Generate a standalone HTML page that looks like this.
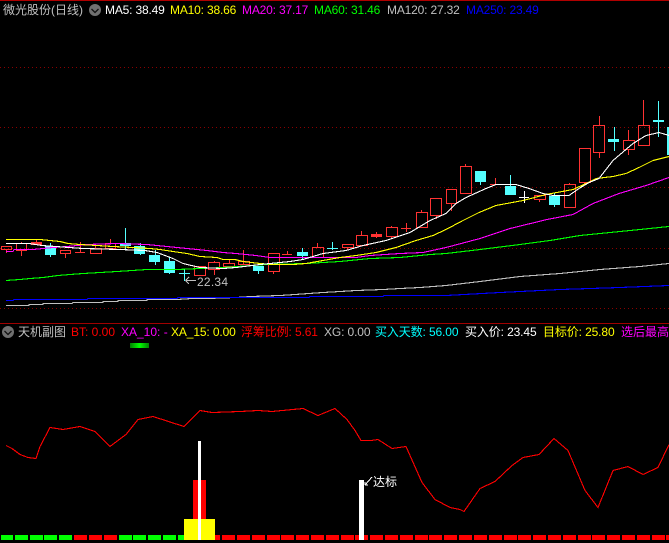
<!DOCTYPE html>
<html><head><meta charset="utf-8"><style>
html,body{margin:0;padding:0;background:#000}
#w{position:relative;width:669px;height:543px;overflow:hidden;background:#000;font:12px "Liberation Sans","WenQuanYi Zen Hei","Noto Sans CJK SC",sans-serif}
#w span{position:absolute;white-space:nowrap;line-height:14px}
#w span.m{letter-spacing:-.17px}
#w span.n{letter-spacing:-.12px}
svg{position:absolute;left:0;top:0}
.ma polyline{stroke-width:1.1}
</style></head><body><div id="w">
<svg width="669" height="543" viewBox="0 0 669 543" shape-rendering="crispEdges" fill="none">
<rect x="0" y="0" width="669" height="1" fill="#b00000"/>
<rect x="0" y="323" width="669" height="1" fill="#a00000"/>
<g stroke="#8a0000" stroke-dasharray="1 3">
<path d="M0 67.5H669M0 127.5H669M0 187.5H669M0 248.5H669M0 308.5H669"/>
</g>
<!-- red candles -->
<g stroke="#ff3232">
<path d="M1.5 246.5H11.5V249.5H1.5ZM6.5 250V253"/>
<path d="M16.5 243.5H26.5V250.5H16.5ZM21.5 242V243M21.5 251V256"/>
<path d="M60.5 250.5H70.5V253.5H60.5ZM65.5 254V258"/>
<path d="M75 252.5H85M80.5 242V253"/>
<path d="M90.5 248.5H101.5V253.5H90.5ZM95.5 244V248"/>
<path d="M105.5 243.5H115.5V248.5H105.5ZM110.5 239V243M110.5 249V250"/>
<path d="M194.5 266.5H205.5V275.5H194.5Z"/>
<path d="M208.5 262.5H219.5V269.5H208.5ZM214.5 261V262M214.5 270V275"/>
<path d="M223.5 263.5H234.5V266.5H223.5ZM229.5 259V263"/>
<path d="M238.5 261.5H249.5V264.5H238.5ZM243.5 250V264"/>
<path d="M268.5 253.5H279.5V271.5H268.5ZM273.5 272V274"/>
<path d="M282 254.5H292M287.5 251V254"/>
<path d="M312.5 247.5H323.5V257.5H312.5ZM317.5 243V247"/>
<path d="M342.5 244.5H353.5V247.5H342.5ZM347.5 248V250"/>
<path d="M356.5 235.5H367.5V245.5H356.5ZM361.5 231V235"/>
<path d="M386.5 227.5H397.5V236.5H386.5ZM391.5 226V227M391.5 237V238"/>
<path d="M401 228.5H411M406.5 223V232"/>
<path d="M416.5 212.5H427.5V227.5H416.5ZM421.5 210V212"/>
<path d="M430.5 198.5H441.5V215.5H430.5ZM436.5 216V219"/>
<path d="M446.5 189.5H456.5V203.5H446.5ZM451.5 204V211"/>
<path d="M460.5 166.5H471.5V193.5H460.5ZM465.5 164V166"/>
<path d="M490 184.5H500M495.5 178V185"/>
<path d="M534.5 195.5H545.5V199.5H534.5ZM539.5 200V202"/>
<path d="M564.5 184.5H575.5V207.5H564.5ZM569.5 183V184"/>
<path d="M579.5 148.5H590.5V182.5H579.5ZM584.5 183V184"/>
<path d="M593.5 125.5H604.5V152.5H593.5ZM599.5 116V125M599.5 153V158"/>
<path d="M623.5 140.5H634.5V149.5H623.5ZM628.5 130V140M628.5 150V155"/>
<path d="M638.5 125.5H649.5V145.5H638.5ZM643.5 100V125"/>
</g>
<g fill="#ff3232">
<rect x="31" y="242" width="11" height="3"/><rect x="36" y="240" width="1" height="2"/>
<rect x="371" y="234" width="11" height="3"/><rect x="376" y="232" width="1" height="6"/>
</g>
<!-- cyan candles -->
<g stroke="#54ffff">
<path d="M50.5 243V257M125.5 228V250M140.5 243V255M155.5 250V265M169.5 257V274M258.5 271V274M302.5 248V260M480.5 182V185M510.5 175V195M554.5 193V207M614.5 127V151M658.5 101V137"/>
<path d="M179 273.5H190M184.5 269V281M327 248.5H338M332.5 242V250"/>
</g>
<g fill="#54ffff">
<rect x="45" y="246" width="11" height="9"/>
<rect x="120" y="243" width="11" height="3"/>
<rect x="134" y="246" width="11" height="8"/>
<rect x="149" y="255" width="11" height="7"/>
<rect x="164" y="261" width="11" height="12"/>
<rect x="253" y="266" width="11" height="5"/>
<rect x="297" y="252" width="11" height="4"/>
<rect x="475" y="171" width="11" height="11"/>
<rect x="505" y="186" width="11" height="9"/>
<rect x="549" y="196" width="11" height="9"/>
<rect x="608" y="139" width="11" height="3"/>
<rect x="653" y="120" width="11" height="2"/>
<rect x="667" y="127" width="2" height="28"/>
</g>
<path d="M519 197.5H529M524.5 191V203" stroke="#fff"/>
<!-- MA lines -->
<g class="ma">
<polyline stroke="#c0c0c0" points="6,305.5 29,305.5 29,304.5 43,304.5 43,303.5 72,303.5 73,302.5 103,302.5 103,301.5 118,301.5 118,300.5 147,300.5 147,299.5 177,299.5 192,298.5 207,298.5 236,297.5 251,296.5 280,295.5 295,294.5 323,292.5 340,291.5 356,290.5 383,289.5 400,288.5 420,287.5 433,286.5 446,285.5 480,281.5 520,276.5 560,273.5 600,269.5 640,266.5 669,263.5"/>
<polyline stroke="#0000ff" points="6,300.5 13,300.5 14,299.5 87,299.5 88,298.5 177,298.5 178,297.5 309,297.5 310,296.5 383,296.5 384,295.5 446,295.5 500,292.5 560,289.5 620,287.5 669,285.5"/>
<polyline stroke="#00ff00" points="6,280.5 20,279.5 30,278.5 43,277.5 58,275.5 70,274.5 83,273.5 100,272.5 117,271.5 147,269.5 177,269.5 223,267.5 266,264.5 306,263.5 340,261.5 370,258.5 400,257.5 430,254.5 446,253.5 480,249.5 520,244.5 550,240.5 580,235.5 610,232.5 640,229.5 669,226.5"/>
<polyline stroke="#ff00ff" points="6,251.5 13,251.5 14,249.5 33,249.5 43,248.5 53,247.5 67,246.5 87,244.5 117,243.5 147,244.5 167,246.5 187,248.5 207,250.5 223,252.5 236,253.5 256,255.5 270,257.5 290,257.5 323,257.5 356,257.5 370,255.5 400,253.5 423,252.5 446,247.5 480,238.5 510,228.5 547,219.5 573,214.5 593,203.5 619,193.5 646,185.5 669,177.5"/>
<polyline stroke="#ffff00" points="6,239.5 40,239.5 50,240.5 60,241.5 68,243.5 80,244.5 97,245.5 113,246.5 133,247.5 150,248.5 160,249.5 173,251.5 187,253.5 200,256.5 217,257.5 223,259.5 235,259.5 243,261.5 260,263.5 273,264.5 293,264.5 306,263.5 323,260.5 340,257.5 356,255.5 376,252.5 396,247.5 416,240.5 433,235.5 446,229.5 463,220.5 479,212.5 496,205.5 523,200.5 546,194.5 573,189.5 586,183.5 596,178.5 613,176.5 626,173.5 639,167.5 653,160.5 669,156.5"/>
<polyline stroke="#ffffff" points="6,243.5 29,243.5 42,245.5 83,248.5 120,249.5 145,250.5 157,252.5 173,258.5 183,263.5 200,267.5 223,268.5 236,267.5 260,264.5 290,261.5 303,259.5 323,253.5 346,250.5 363,245.5 386,240.5 410,232.5 430,220.5 446,213.5 456,203.5 466,197.5 486,188.5 496,184.5 516,184.5 529,188.5 543,193.5 553,195.5 569,195.5 579,188.5 589,182.5 599,178.5 613,160.5 633,143.5 646,135.5 659,132.5 669,135.5"/>
</g>
<path d="M185.5 280.5H196M185.5 280.5L189 277M185.5 280.5L189 284" stroke="#c0c0c0"/>
<!-- sub chart -->
<defs><linearGradient id="g"><stop offset="0" stop-color="#008000"/><stop offset=".5" stop-color="#00ff00"/><stop offset="1" stop-color="#008000"/></linearGradient></defs>
<rect x="130" y="343" width="19" height="5" fill="url(#g)"/>
<g class="ma"><polyline stroke="#ff0000" points="6,445.5 12,448.5 20,454.5 28,457.5 36,458.5 40,446.5 50,427.5 63,429.5 80,426.5 95,431.5 110,446.5 126,434.5 138,419.5 153,416.5 184,426.5 200,410.5 212,412.5 240,411.5 258,410.5 272,411.5 303,408.5 318,415.5 335,408.5 347,419.5 355,430.5 361,440.5 371,440.5 378,439.5 392,448.5 406,446.5 414,464.5 422,482.5 435,499.5 450,507.5 460,509.5 464,511.5 480,488.5 495,481.5 512,465.5 523,457.5 539,454.5 554,438.5 568,450.5 585,490.5 598,507.5 613,470.5 628,466.5 643,474.5 658,467.5 669,444.5"/></g>
<g fill="#00ff00">
<rect x="1" y="535" width="12" height="5"/><rect x="15" y="535" width="13" height="5"/><rect x="30" y="535" width="13" height="5"/><rect x="44" y="535" width="13" height="5"/><rect x="59" y="535" width="13" height="5"/>
<rect x="119" y="535" width="13" height="5"/><rect x="133" y="535" width="13" height="5"/><rect x="148" y="535" width="13" height="5"/><rect x="163" y="535" width="13" height="5"/><rect x="178" y="535" width="13" height="5"/>
</g>
<g fill="#ff0000">
<rect x="74" y="535" width="13" height="5"/><rect x="89" y="535" width="13" height="5"/><rect x="104" y="535" width="13" height="5"/>
<rect x="207" y="535" width="13" height="5"/><rect x="222" y="535" width="13" height="5"/><rect x="237" y="535" width="13" height="5"/><rect x="252" y="535" width="13" height="5"/><rect x="267" y="535" width="13" height="5"/><rect x="281" y="535" width="13" height="5"/><rect x="296" y="535" width="13" height="5"/><rect x="311" y="535" width="13" height="5"/><rect x="326" y="535" width="13" height="5"/><rect x="341" y="535" width="13" height="5"/><rect x="355" y="535" width="13" height="5"/><rect x="370" y="535" width="13" height="5"/><rect x="385" y="535" width="13" height="5"/><rect x="400" y="535" width="13" height="5"/><rect x="415" y="535" width="13" height="5"/><rect x="429" y="535" width="13" height="5"/><rect x="444" y="535" width="13" height="5"/><rect x="459" y="535" width="13" height="5"/><rect x="474" y="535" width="13" height="5"/><rect x="489" y="535" width="13" height="5"/><rect x="504" y="535" width="13" height="5"/><rect x="518" y="535" width="13" height="5"/><rect x="533" y="535" width="13" height="5"/><rect x="548" y="535" width="13" height="5"/><rect x="563" y="535" width="13" height="5"/><rect x="578" y="535" width="13" height="5"/><rect x="592" y="535" width="13" height="5"/><rect x="607" y="535" width="13" height="5"/><rect x="622" y="535" width="13" height="5"/><rect x="637" y="535" width="13" height="5"/><rect x="652" y="535" width="13" height="5"/><rect x="666" y="535" width="3" height="5"/>
<rect x="193" y="480" width="13" height="39"/>
</g>
<rect x="184" y="519" width="31" height="21" fill="#ffff00"/>
<rect x="198" y="441" width="3" height="99" fill="#fff"/>
<rect x="359" y="480" width="5" height="60" fill="#fff"/>
<path d="M365 485L372 477M365 485L368 485M365 485L365 482" stroke="#fff"/>
<!-- icons -->
<g shape-rendering="auto">
<circle cx="95" cy="10" r="6" fill="#707070"/>
<path d="M91.5 9L95 12.5L98.5 9" stroke="#111" stroke-width="1.3"/>
<circle cx="8" cy="332" r="6" fill="#707070"/>
<path d="M4.5 331L8 334.5L11.5 331" stroke="#111" stroke-width="1.3"/>
</g>
</svg>
<span style="left:3px;top:3px;color:#c0c0c0;font-size:12px">微光股份(日线)</span>
<span class="m" style="left:105px;top:3px;color:#fff">MA5: 38.49</span>
<span class="m" style="left:170px;top:3px;color:#ff0">MA10: 38.66</span>
<span class="m" style="left:242px;top:3px;color:#f0f">MA20: 37.17</span>
<span class="m" style="left:314px;top:3px;color:#0f0">MA60: 31.46</span>
<span class="m" style="left:387px;top:3px;color:#c0c0c0">MA120: 27.32</span>
<span class="m" style="left:466px;top:3px;color:#00f">MA250: 23.49</span>
<span style="left:197px;top:275px;color:#c0c0c0;letter-spacing:.25px">22.34</span>
<span style="left:18px;top:325px;color:#c0c0c0">天机副图</span>
<span style="left:71px;top:325px;color:#f00">BT: 0.00</span>
<span style="left:121px;top:325px;color:#f0f">XA_10: -</span>
<span class="n" style="left:171px;top:325px;color:#ff0">XA_15: 0.00</span>
<span class="n" style="left:241px;top:325px;color:#f00">浮筹比例: 5.61</span>
<span class="n" style="left:324px;top:325px;color:#c0c0c0">XG: 0.00</span>
<span class="n" style="left:375px;top:325px;color:#0ff">买入天数: 56.00</span>
<span class="n" style="left:465px;top:325px;color:#fff">买入价: 23.45</span>
<span class="n" style="left:543px;top:325px;color:#ff0">目标价: 25.80</span>
<span style="left:621px;top:325px;color:#f0f">选后最高</span>
<span style="left:373px;top:475px;color:#fff">达标</span>
</div></body></html>
